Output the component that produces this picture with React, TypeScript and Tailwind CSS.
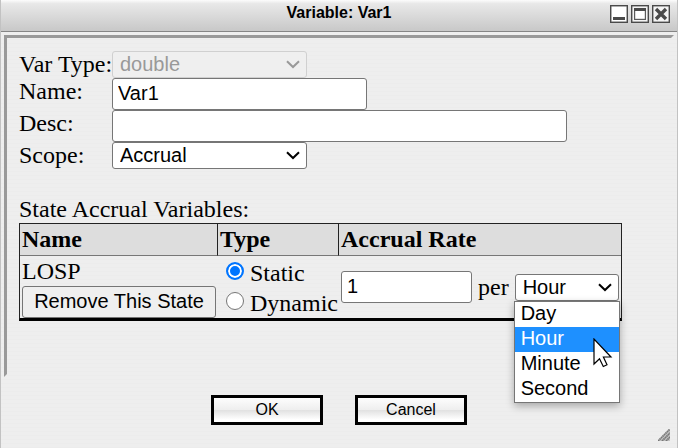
import { useState } from "react";
import type { ReactNode } from "react";

const units = ["Day", "Hour", "Minute", "Second"];

function Chevron() {
  return (
    <svg className="pointer-events-none absolute top-0 right-1.5 h-full w-4" viewBox="0 0 16 27" fill="none" aria-hidden="true">
      <path d="M2 10.2 8 16 14 10.2" stroke="currentColor" strokeWidth="2" />
    </svg>
  );
}

function Select({ id, options, value, disabled, width, label }: { id: string; options: string[]; value: string; disabled?: boolean; width: string; label?: string }) {
  const tone = disabled ? "border-[#d0d0d0] bg-[#efefef] text-[#999]" : "border-[#767676] bg-white text-black";
  return (
    <div className={`relative ${width} ${disabled ? "text-[#999]" : "text-black"}`}>
      <select
        id={id}
        defaultValue={value}
        disabled={disabled}
        aria-label={label}
        className={`block h-[27px] w-full appearance-none rounded-[3px] border px-[7px] pb-0.5 font-['Liberation_Sans',Arial,sans-serif] text-xl leading-6 opacity-100 outline-none ${tone}`}
      >
        {options.map((o) => (
          <option key={o}>{o}</option>
        ))}
      </select>
      <Chevron />
    </div>
  );
}

const textBox =
  "block h-8 rounded-[3px] border border-[#767676] bg-white px-[5px] pb-0.5 font-['Liberation_Sans',Arial,sans-serif] text-xl leading-6 text-black outline-none";

function WindowButton({ label, children }: { label: string; children: ReactNode }) {
  return (
    <button type="button" aria-label={label} className="block size-[18px]">
      <svg viewBox="0 0 18 18" className="block size-full">
        <rect x="0.7" y="0.7" width="16.6" height="16.6" fill="#f4f4f4" stroke="#4a4a4a" strokeWidth="1.4" />
        {children}
      </svg>
    </button>
  );
}

function TypeRadio({ label, checked, onChange }: { label: string; checked: boolean; onChange: () => void }) {
  return (
    <label className="flex h-[30px] items-center gap-1.5 pl-2 leading-[30px]">
      <input
        type="radio"
        name="accrual-type"
        checked={checked}
        onChange={onChange}
        className="mb-1 size-[18px] shrink-0 appearance-none rounded-full border border-[#767676] bg-white checked:border-2 checked:border-[#0075ff] checked:bg-[#0075ff] checked:shadow-[inset_0_0_0_2px_#fff]"
      />
      {label}
    </label>
  );
}

function DialogButton({ children }: { children: ReactNode }) {
  return (
    <button
      type="button"
      className="h-[30px] w-28 border-3 border-black bg-[linear-gradient(to_bottom,#fdfdfd_0%,#eee_50%,#e2e2e2_52%,#fff_90%)] pb-px font-['Liberation_Sans',Arial,sans-serif] text-base leading-6"
    >
      {children}
    </button>
  );
}

export default function App() {
  const [type, setType] = useState("Static");

  return (
    <div className="flex min-h-screen flex-col border-r border-l border-[#c2c2c2] bg-[repeating-linear-gradient(to_bottom,#eeeeee_0px,#eeeeee_3px,#ececec_3px,#ececec_4px)] font-['Liberation_Serif','Times_New_Roman',serif] text-2xl text-black">
      <header className="grid h-8 grid-cols-[1fr_auto_1fr] items-start border-b border-[#858585] bg-[linear-gradient(to_bottom,#fcfcfc_0%,#e8e8e8_12%,#c8c8c8_100%)]">
        <h1 className="col-start-2 font-['Liberation_Sans',Arial,sans-serif] text-base leading-[26px] font-bold">Variable: Var1</h1>
        <div className="flex justify-end gap-[3px] pt-[5px] pr-[7px]">
          <WindowButton label="Minimize">
            <rect x="2" y="2" width="14" height="14" fill="#fff" />
            <rect x="3" y="12" width="12" height="3" fill="#4a4a4a" />
          </WindowButton>
          <WindowButton label="Maximize">
            <rect x="3.6" y="4" width="10.8" height="10.4" fill="#fff" stroke="#5a5a5a" strokeWidth="1.2" />
            <rect x="3" y="3" width="12" height="3" fill="#4a4a4a" />
          </WindowButton>
          <WindowButton label="Close">
            <path d="M4 4 14 14M14 4 4 14" stroke="#4a4a4a" strokeWidth="3.4" />
          </WindowButton>
        </div>
      </header>

      <main className="mx-[3px] mt-[3px] flex-1 border-3 border-t-[#999] border-r-transparent border-b-transparent border-l-[#999] px-3 pt-[13px]">
        <div className="grid grid-cols-[93px_1fr] items-start leading-[27px]">
          <label htmlFor="var-type" className="whitespace-nowrap">Var Type:</label>
          <Select id="var-type" options={["double"]} value="double" disabled width="w-[195px]" />
          <label htmlFor="name">Name:</label>
          <input id="name" defaultValue="Var1" className={`${textBox} w-[255px]`} />
          <label htmlFor="desc">Desc:</label>
          <input id="desc" className={`${textBox} w-[455px]`} />
          <label htmlFor="scope">Scope:</label>
          <Select id="scope" options={["Accrual"]} value="Accrual" width="w-[195px]" />
        </div>

        <h2 className="mt-[27px] leading-[27px]">State Accrual Variables:</h2>
        <table className="w-[603px] table-fixed border-separate border-spacing-0 border-t border-r border-b-3 border-l border-t-[#222] border-r-[#222] border-b-black border-l-[#222] text-left">
          <colgroup>
            <col className="w-[198px]" />
            <col className="w-[121px]" />
            <col />
          </colgroup>
          <thead>
            <tr className="h-8 bg-[#ddd] leading-[31px]">
              <th className="border-r border-b border-r-[#222] border-b-[#777] px-0.5 py-0">Name</th>
              <th className="border-r border-b border-r-[#222] border-b-[#777] px-0.5 py-0">Type</th>
              <th className="border-b border-[#777] px-0.5 py-0">Accrual Rate</th>
            </tr>
          </thead>
          <tbody>
            <tr>
              <td className="px-0.5 py-0">
                <div className="leading-[29px]">LOSP</div>
                <button
                  type="button"
                  className="block h-8 w-full rounded-[3px] border border-[#767676] bg-[#efefef] pb-px font-['Liberation_Sans',Arial,sans-serif] text-xl leading-6 whitespace-nowrap"
                >
                  Remove This State
                </button>
              </td>
              <td className="px-0 pt-0.5 pb-0">
                <TypeRadio label="Static" checked={type === "Static"} onChange={() => setType("Static")} />
                <TypeRadio label="Dynamic" checked={type === "Dynamic"} onChange={() => setType("Dynamic")} />
              </td>
              <td className="px-0.5 py-0">
                <div className="flex items-center gap-1.5">
                  <input aria-label="Accrual rate" defaultValue="1" className={`${textBox} w-[131px]`} />
                  <span>per</span>
                  <div className="relative">
                    <Select id="unit" label="Time unit" options={units} value="Hour" width="w-[104px]" />
                    <ul
                      role="listbox"
                      aria-label="Time unit options"
                      className="absolute top-full -left-px z-10 w-[106px] border border-[#767676] bg-white font-['Liberation_Sans',Arial,sans-serif] text-xl leading-[23px] shadow-[0_3px_8px_rgba(0,0,0,0.3)]"
                    >
                      {units.map((u) => (
                        <li key={u} role="option" aria-selected={u === "Hour"} className="px-1.5 pb-0.5 aria-selected:bg-[#1e90ff] aria-selected:text-white">
                          {u}
                        </li>
                      ))}
                    </ul>
                    <svg className="absolute top-16 left-[78px] z-20 h-[30px] w-5" viewBox="0 0 20 30" aria-hidden="true">
                      <path d="M1 1V26L6.5 20.8 10.3 28.5 14 26.8 10.4 19H18Z" fill="#fff" stroke="#000" strokeWidth="1.2" />
                    </svg>
                  </div>
                </div>
              </td>
            </tr>
          </tbody>
        </table>
      </main>

      <footer className="relative flex justify-center gap-8 pt-[18px] pb-[23px]">
        <DialogButton>OK</DialogButton>
        <DialogButton>Cancel</DialogButton>
        <svg className="absolute right-[7px] bottom-[7px] size-3" viewBox="0 0 12 12" aria-hidden="true">
          <path d="M0 12 12 0V12Z" fill="#c4c4c4" />
          <path d="M0 12 12 0M4 12 12 4M8 12 12 8" stroke="#777" strokeWidth="1.8" strokeDasharray="1.6 0.5" />
        </svg>
      </footer>
    </div>
  );
}
